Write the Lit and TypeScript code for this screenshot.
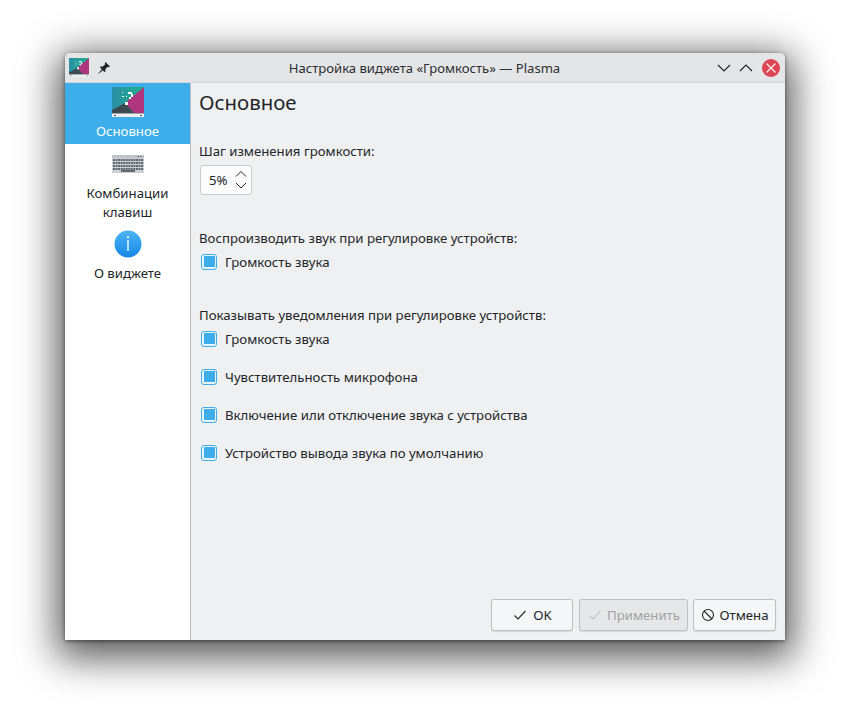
import { LitElement, html, css, svg } from "lit";
import { customElement } from "lit/decorators.js";

let uid = 0;
const wallpaper = (w: number, h: number) => {
  const id = `wp${uid++}`;
  return html`<svg width=${w} height=${h} viewBox="0 0 32 32">
  <defs><linearGradient id=${id} x1="0" y1="0" x2="1" y2="0"><stop offset="0" stop-color="#2c8fa8"/><stop offset="1" stop-color="#1db28a"/></linearGradient></defs>
  <rect x="0" y="0" width="32" height="26" fill="url(#${id})"/>
  <polygon points="32,0 32,26 22,26 13,16" fill="#b0357f"/>
  <polygon points="0,26 0,23 13,16 22,26" fill="#3d4a50"/>
  <rect x="0" y="26" width="32" height="1" fill="#9aa3a8"/>
  <rect x="0" y="27" width="32" height="3" fill="#eff0f1"/>
  <rect x="2" y="28" width="2" height="1" fill="#4d4d4d"/><rect x="28" y="28" width="2" height="1" fill="#4d4d4d"/>
  <g fill="#fff"><rect x="16" y="5" width="4" height="2"/><rect x="19" y="7" width="2" height="3"/><rect x="17" y="10" width="2" height="2"/><rect x="13" y="15" width="3" height="3"/><rect x="10" y="5" width="1" height="1"/><rect x="10" y="9" width="2" height="1"/><rect x="14" y="9" width="1" height="1"/></g>
</svg>`;
};

const check = (color: string) => html`<svg width="16" height="16" viewBox="0 0 16 16"><path d="M2.5 8.5 L6 12 L13.5 4" fill="none" stroke=${color} stroke-width="1.1"/></svg>`;

@customElement("app-root")
export class AppRoot extends LitElement {
  static styles = css`
    :host { display: block; width: 850px; height: 717px; background: #fff; overflow: hidden;
      font-family: "Noto Sans", sans-serif; font-size: 13.2px; color: #232629; }
    .stage { padding: 53px 65px 77px; height: 717px; box-sizing: border-box; }
    .win { width: 720px; height: 587px; display: flex; flex-direction: column; background: #eff0f1;
      border-radius: 5px 5px 0 0; box-shadow: 0 10px 38px 8px rgba(0,0,0,.66), 0 1px 4px rgba(0,0,0,.5); }
    .title { height: 29px; flex: none; display: flex; align-items: center; background: #e3e5e7; border-radius: 5px 5px 0 0;
      border-bottom: 1px solid #d3d5d7; padding: 0 5px 0 4px; }
    .title .left { display: flex; align-items: center; gap: 8px; width: 64px; }
    .title .name { flex: 1; text-align: center; color: #2c2f32; font-size: 13.08px; }
    .title .right { display: flex; align-items: center; gap: 6px; width: 64px; justify-content: flex-end; }
    .close { width: 18px; height: 18px; border-radius: 50%; background: #da4453; display: flex; align-items: center; justify-content: center; margin-left: 2px; }
    .body { flex: 1; display: flex; min-height: 0; }
    .side { width: 125px; background: #fff; border-right: 1px solid #bcc0c4; flex: none; }
    .item { display: flex; flex-direction: column; align-items: center; text-align: center; line-height: 19px; }
    .item.on { background: #3daee9; color: #fcfcfc; height: 61px; padding-top: 4px; box-sizing: border-box; }
    .item.on svg { margin-bottom: 3px; }
    .item.kb { padding-top: 11px; height: 86px; box-sizing: border-box; }
    .item.kb svg { margin-bottom: 11px; }
    .item.kb span { display: block; }
    .item.info svg { margin-bottom: 6px; }
    .main { flex: 1; display: flex; flex-direction: column; padding: 6px 9px 9px 8px; min-width: 0; }
    h1 { margin: 0; font-weight: 400; font-size: 20.4px; line-height: 27px; color: #232629; }
    .lab { line-height: 19px; }
    .l1 { margin-top: 26px; }
    .spin { margin: 4px 0 0 1px; width: 52px; height: 30px; box-sizing: border-box; background: #fcfcfc; border: 1px solid #c9cbcd; border-radius: 3px;
      display: flex; align-items: center; padding-left: 8px; }
    .spin span { width: 25px; }
    .spin svg { display: block; }
    .l2 { margin-top: 34px; }
    .l3 { margin-top: 35px; }
    .cb { display: flex; align-items: center; gap: 8px; height: 19px; }
    .cbs { margin-top: 4px; display: flex; flex-direction: column; gap: 19px; }
    .cbx { width: 16px; height: 16px; box-sizing: border-box; border: 1px solid #3daee9; border-radius: 3px; background: #eaf4fa; display: flex; align-items: center; justify-content: center; margin-left: 2px; }
    .cbx i { display: block; width: 11px; height: 11px; background: #3daee9; }
    .spacer { flex: 1; }
    .btns { display: flex; justify-content: flex-end; gap: 5px; }
    .btn { height: 32px; box-sizing: border-box; border: 1px solid #bcc0c3; border-radius: 3px; background: #f5f6f7; box-shadow: 0 1px 1px rgba(0,0,0,.1);
      display: flex; align-items: center; justify-content: center; gap: 5px; color: #232629; }
    .btn.ok { width: 82px; margin-right: 1px; }
    .btn.ap { width: 109px; color: #9fa3a6; background: #e6e7e8; gap: 4px; }
    .btn.ca { width: 83px; }
  `;

  private cb(t: string) {
    return html`<div class="cb"><div class="cbx"><i></i></div><span>${t}</span></div>`;
  }

  render() {
    return html`<div class="stage"><div class="win">
      <div class="title">
        <div class="left">
          ${wallpaper(20, 20)}
          <svg width="14" height="14" viewBox="0 0 14 14"><path d="M8.5 1 L13 5.5 L11.8 6.2 L10.8 5.8 L8.5 8.1 L8.4 10.4 L7.4 11 L3 6.6 L3.6 5.6 L5.9 5.5 L8.2 3.2 L7.8 2.2 Z M4.8 8.2 L5.8 9.2 L1.6 12.8 L1.2 12.4 Z" fill="#232629"/></svg>
        </div>
        <div class="name">Настройка виджета «Громкость» — Plasma</div>
        <div class="right">
          <svg width="16" height="16" viewBox="0 0 16 16"><path d="M2 5 L8 11 L14 5" fill="none" stroke="#232629" stroke-width="1.2"/></svg>
          <svg width="16" height="16" viewBox="0 0 16 16"><path d="M2 11 L8 5 L14 11" fill="none" stroke="#232629" stroke-width="1.2"/></svg>
          <div class="close"><svg width="12" height="12" viewBox="0 0 12 12"><path d="M1.5 1.5 L10.5 10.5 M10.5 1.5 L1.5 10.5" stroke="#fce8ea" stroke-width="1.4"/></svg></div>
        </div>
      </div>
      <div class="body">
        <div class="side">
          <div class="item on">${wallpaper(32, 32)}<span>Основное</span></div>
          <div class="item kb">
            <svg width="32" height="18" viewBox="0 0 32 18">
              <rect width="32" height="18" fill="#bfc5c6"/><rect y="3" width="32" height="15" fill="#cdd1d3"/>
              ${[4, 7, 10, 13].map((y) => svg`<g>${Array.from({ length: 12 }, (_, i) => svg`<rect x=${1 + i * 2.55} y=${y} width="2" height="2" fill="#5f6a6e"/>`)}</g>`)}
              <rect x="9" y="15" width="14" height="2" fill="#5f6a6e"/>
              <rect x="25" y="1" width="2" height="1" fill="#7a8386"/><rect x="28" y="1" width="2" height="1" fill="#7a8386"/>
            </svg>
            <span>Комбинации</span><span>клавиш</span>
          </div>
          <div class="item info">
            <svg width="28" height="28" viewBox="0 0 28 28"><defs><linearGradient id="ig" x1="0" y1="0" x2="0" y2="1"><stop offset="0" stop-color="#4db5f5"/><stop offset="1" stop-color="#1587e6"/></linearGradient></defs>
              <circle cx="14" cy="14" r="13.5" fill="url(#ig)"/>
              <rect x="13" y="6" width="2" height="2" fill="#dff1fd"/><rect x="13" y="10" width="2" height="11" fill="#b9e0fa"/></svg>
            <span>О виджете</span>
          </div>
        </div>
        <div class="main">
          <h1>Основное</h1>
          <div class="lab l1">Шаг изменения громкости:</div>
          <div class="spin"><span>5%</span>
            <svg width="14" height="24" viewBox="0 0 14 24"><path d="M2 8.5 L7 3.5 L12 8.5 M2 15 L7 20 L12 15" fill="none" stroke="#232629" stroke-width="1"/></svg>
          </div>
          <div class="lab l2">Воспроизводить звук при регулировке устройств:</div>
          <div class="cbs">${this.cb("Громкость звука")}</div>
          <div class="lab l3">Показывать уведомления при регулировке устройств:</div>
          <div class="cbs">
            ${this.cb("Громкость звука")}
            ${this.cb("Чувствительность микрофона")}
            ${this.cb("Включение или отключение звука с устройства")}
            ${this.cb("Устройство вывода звука по умолчанию")}
          </div>
          <div class="spacer"></div>
          <div class="btns">
            <div class="btn ok">${check("#232629")}<span>OK</span></div>
            <div class="btn ap">${check("#c0c3c5")}<span>Применить</span></div>
            <div class="btn ca"><svg width="14" height="14" viewBox="0 0 14 14"><circle cx="7" cy="7" r="5.5" fill="none" stroke="#232629" stroke-width="1.1"/><path d="M3 3 L11 11" stroke="#232629" stroke-width="1.1"/></svg><span>Отмена</span></div>
          </div>
        </div>
      </div>
    </div></div>`;
  }
}
